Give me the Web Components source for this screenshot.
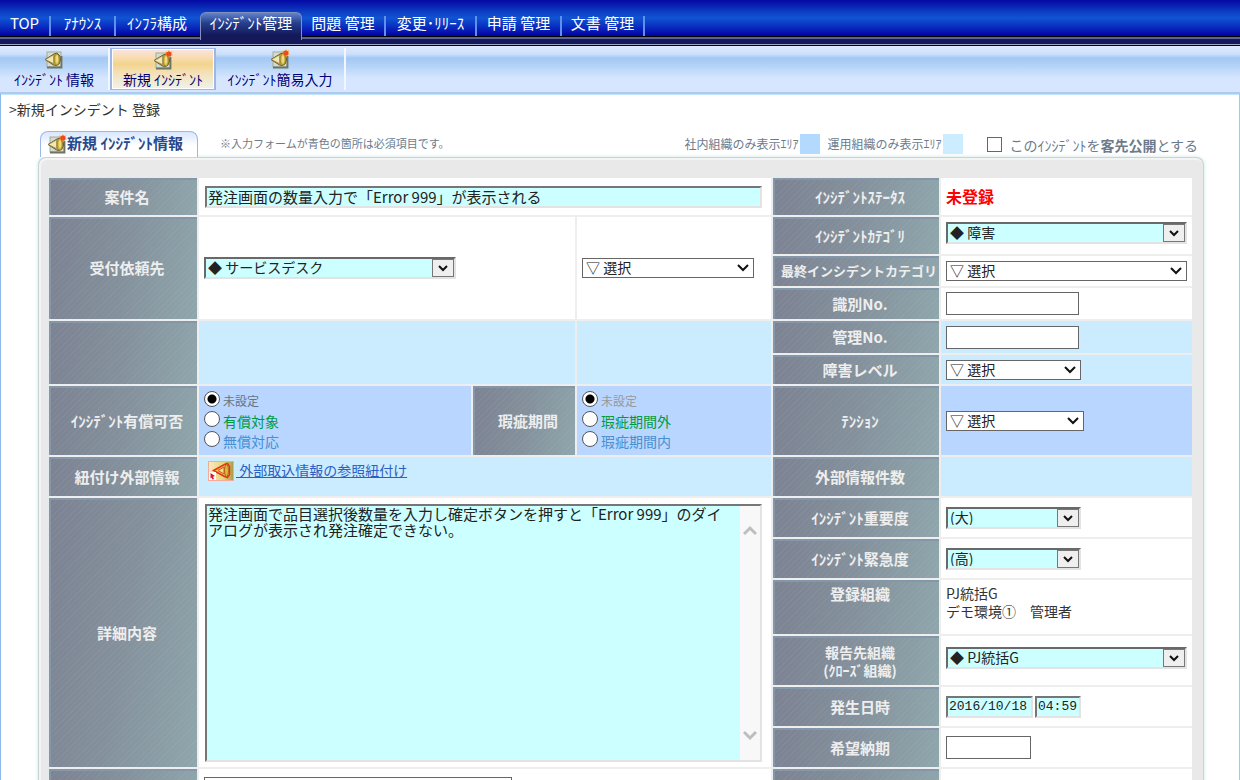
<!DOCTYPE html>
<html lang="ja">
<head>
<meta charset="utf-8">
<title>新規インシデント 登録</title>
<style>
html, body { margin: 0; height: 100%; }
body { font: 14px/16px "Noto Sans CJK JP", sans-serif; color: #333; background: #fff; }
</style>
</head>
<body>
<incident-page></incident-page>

<script>
const sheet = (root, html) => {
  const t = document.createElement('template');
  t.innerHTML = html;
  root.appendChild(t.content.cloneNode(true));
};
const define = (name, render, extra = {}) => {
  customElements.define(name, class extends HTMLElement {
    static formAssociated = !!extra.field;
    constructor() {
      super();
      this.attachShadow({ mode: 'open', delegatesFocus: !!extra.field });
    }
    connectedCallback() {
      if (!this.shadowRoot.childNodes.length) sheet(this.shadowRoot, render(this));
    }
  });
};
const attr = (el, name) => el.getAttribute(name) || '';

/* Megaphone icon, with an optional red "new" spark */
define('horn-icon', el => `
<style>
  :host { display: block; width: 20px; height: 20px; flex: none; }
  svg { display: block; }
</style>
<svg width="20" height="20" viewBox="0 0 20 20" aria-hidden="true">
  <rect x="3" y="3" width="14" height="15" fill="#d3dcd0" stroke="#a2ab9c"/>
  <path d="M3 18.500h14.500V7" fill="none" stroke="#6c7466" stroke-width="1.800"/>
  <path d="M1 10.500l9-5.500 3-1 3 3 .5 4-1.500 4-2.500 1.500-3-.5z" fill="#c4a62f" stroke="#6b5a2a"/>
  <path d="M1.500 10.500l8-4.500v8.500z" fill="#f3e7b4" stroke="#8f8154" stroke-width=".6"/>
  <ellipse cx="12.800" cy="10.500" rx="2.600" ry="5.500" fill="#d8bf4a" stroke="#8f7a26" stroke-width=".8"/>
  <path d="M13 6.500v7" stroke="#f6eeb0" stroke-width="1.200"/>
  ${el.hasAttribute('fresh') ? '<path d="M16 0l1 2 2.500-1-1 2.500 1.500 2-2.500.3-1 2.200-1.800-2-2.700.5 1.300-2.500-1.300-2.500 2.800.5z" fill="#ffb03a"/><circle cx="15.800" cy="4" r="2.600" fill="#ee4a1e"/>' : ''}
</svg>`);

define('link-icon', () => `
<style>:host { display: block; width: 26px; height: 20px; flex: none; white-space: normal; } svg { display: block; }</style>
<svg width="26" height="20" viewBox="0 0 26 20" aria-hidden="true">
  <defs><linearGradient id="g"><stop offset="0" stop-color="#fdebc0"/><stop offset=".6" stop-color="#e6d479"/><stop offset="1" stop-color="#a89a48"/></linearGradient></defs>
  <rect x=".5" y=".5" width="25" height="19" fill="url(#g)" stroke="#f6ab98"/>
  <path d="M5.500 9.500l11-6 3-1 2 3v8l-2 3-3-1z" fill="#eecb4a" stroke="#e2351c" stroke-width="1.500"/>
  <path d="M10 9.500l6-3.500v7z" fill="#f3dc8a" stroke="#e2501c"/>
  <ellipse cx="18.500" cy="9.500" rx="2" ry="6" fill="#d9b83a" stroke="#b85a1c"/>
  <rect x="1" y="11" width="7" height="8" fill="#fff"/>
  <path d="M2.500 12l4.500 3-2 .8 1 2.200-1.500.5-1-2-1 1z" fill="#e01530"/>
</svg>`);

define('nav-tab', el => `
<style>
  :host { display: flex; flex: none; box-sizing: border-box; height: 36px; padding-top: 16px; }
  a { flex: 1; text-align: center; font-size: 15px; line-height: 14px; color: #fff; text-decoration: none;
      white-space: nowrap; border-right: 2px solid #5f90f0; height: 20px; box-sizing: border-box; }
  :host([current]) { padding-top: 12px; height: 40px; position: relative; }
  :host([current]) a { height: 28px; padding-top: 3px; border: 1px solid #8290c0; border-bottom: 0; border-radius: 6px 6px 0 0;
      background: linear-gradient(#6283cc 0, #26408e 10px, #15195a 22px); }
  :host([before]) a { border-right-color: transparent; }
</style>
<a href="#${attr(el, 'to')}"><slot></slot></a>`);

define('sub-tab', el => `
<style>
  :host { display: block; flex: none; box-sizing: border-box; height: 42px; margin-top: 2px; border-right: 2px solid #f2f6ff; }
  a { display: flex; flex-direction: column; align-items: center; height: 42px; padding-top: 1px; box-sizing: border-box;
      font-size: 14px; line-height: 20px; color: #000078; text-decoration: none; white-space: nowrap; }
  :host([current]) { border: 2px solid #9db8e4; border-width: 1px 2px; }
  :host([current]) a { height: 40px; padding-top: 0; border: 1px solid #fff; line-height: 18px;
      background: linear-gradient(#fbe3dc 0, #f8dcb0 8px, #f3d48c 14px, #f3e2bd 24px, #eef2e6); }
</style>
<a href="#${attr(el, 'to')}"><horn-icon ${el.hasAttribute('fresh') ? 'fresh' : ''}></horn-icon><span><slot></slot></span></a>`);

define('head-cell', () => `
<style>
  :host { display: flex; align-items: center; justify-content: center; text-align: center; box-sizing: border-box;
    font-weight: 700; font-size: 15px; line-height: 16px; color: #eee; white-space: nowrap; padding: 0 0 2px 6px;
    border: 2px solid #8496aa; border-width: 2px 0 0 2px;
    background: repeating-linear-gradient(135deg, rgba(255,255,255,.04) 0 1px, transparent 1px 4px),
                linear-gradient(100deg, #7c8292, #84919c 50%, #8fa6ac); }
  :host([top]) { align-items: flex-start; padding-top: 4px; }
  :host([small]) { font-size: 13px; padding-left: 4px; }
</style><slot></slot>`);

define('data-cell', () => `
<style>
  :host { display: flex; align-items: center; box-sizing: border-box; padding: 0 5px; background: #fff; min-width: 0; gap: 2px; }
  :host([raised]) { padding-bottom: 6px; }
  :host([top]) { align-items: flex-start; padding-top: 4px; }
  :host([low]) { align-items: flex-start; padding-top: 8px; }
  :host([ops]) { background: #cbecff; }
  :host([inner]) { background: #b8d6ff; }
</style><slot></slot>`);

define('drop-list', el => `
<style>
  :host { display: block; flex: none; max-width: 100%; }
  select { display: block; width: 100%; height: 20px; box-sizing: border-box; margin: 0; padding: 0 20px 2px 3px; appearance: none; border-radius: 0;
    font: 14px/16px "Noto Sans CJK JP", sans-serif; color: #222; border: 1px solid #666;
    background: #fff url("data:image/svg+xml,%3Csvg xmlns='http://www.w3.org/2000/svg' width='12' height='8'%3E%3Cpath d='M1 1l5 5 5-5' fill='none' stroke='%23111' stroke-width='2'/%3E%3C/svg%3E") no-repeat right 4px center; }
  :host([must]) select { height: 22px; border: 2px solid; border-color: #696969 #e3e3e3 #e3e3e3 #696969; padding-left: 2px;
    background: #cff url("data:image/svg+xml,%3Csvg xmlns='http://www.w3.org/2000/svg' width='22' height='18'%3E%3Crect x='.5' y='.5' width='21' height='17' fill='%23efefef' stroke='%23777'/%3E%3Cpath d='M7 7l4 4 4-4' fill='none' stroke='%23111' stroke-width='2'/%3E%3C/svg%3E") no-repeat right center; }
</style>
<select aria-label="${attr(el, 'name')}"><option>${attr(el, 'value')}</option></select>`, { field: true });

define('text-box', el => `
<style>
  :host { display: block; flex: none; max-width: 100%; }
  :host([wide]) { flex: 1; padding: 0 4px 0 1px; }
  input { display: block; width: 100%; height: 23px; box-sizing: border-box; margin: 0; padding: 0 1px; border: 1px solid #666; border-radius: 0;
    font: 15px/16px "Noto Sans CJK JP", sans-serif; color: #222; background: #fff; }
  :host([must]) input { height: 22px; background: #cff; border: 2px solid; border-color: #767676 #e3e3e3 #e3e3e3 #767676; }
  :host([stamp]) input { font-family: "Liberation Mono", monospace; font-size: 13px; }
</style>
<input type="text" aria-label="${attr(el, 'name')}" value="${attr(el, 'value')}">`, { field: true });

define('memo-box', el => `
<style>
  :host { display: flex; flex: 1; align-self: stretch; margin: 6px 4px 5px 1px; box-sizing: border-box;
    border: 2px solid; border-color: #767676 #e3e3e3 #e3e3e3 #767676; background: #cff; }
  textarea { flex: 1; min-width: 0; box-sizing: border-box; margin: 0; padding: 0 8px 0 1px; border: 0; resize: none; overflow: hidden; background: transparent;
    font: 15px/16px "Noto Sans CJK JP", sans-serif; color: #222; outline: 0; word-break: break-all; }
  .bar { width: 20px; background: #f8f8f8; display: flex; flex-direction: column; justify-content: space-between; padding: 18px 0; box-sizing: border-box; }
  button { border: 0; padding: 0; background: none; height: 12px; display: flex; justify-content: center; }
</style>
<textarea aria-label="${attr(el, 'name')}">${el.textContent}</textarea>
<div class="bar">
  <button type="button" aria-label="上へ"><svg width="14" height="12"><path d="M1 10l6-6 6 6" fill="none" stroke="#bebebe" stroke-width="3"/></svg></button>
  <button type="button" aria-label="下へ"><svg width="14" height="12"><path d="M1 2l6 6 6-6" fill="none" stroke="#bebebe" stroke-width="3"/></svg></button>
</div>`, { field: true });

define('radio-set', el => {
  const tone = el.hasAttribute('dim') ? '#999' : '#66737f';
  return `
<style>
  :host { display: block; margin-top: 1px; }
  fieldset { border: 0; margin: 0; padding: 0; min-width: 0; }
  label { display: flex; gap: 3px; height: 20px; white-space: nowrap; color: #468fd0; }
  label span { padding-top: 1px; line-height: 18px; }
  label:nth-of-type(1) { color: ${tone}; font-size: 12px; }
  label:nth-of-type(2) { color: #009a3e; }
  input { appearance: none; flex: none; box-sizing: border-box; width: 16px; height: 16px; margin: 0; border: 1px solid #555; border-radius: 50%; background: #fff; }
  input:checked { background: radial-gradient(circle, #000 0 4px, #fff 5px); }
</style>
<fieldset aria-label="${attr(el, 'name')}">
${attr(el, 'items').split(',').map((t, i) => `<label><input type="radio" name="r"${i ? '' : ' checked'}><span>${t}</span></label>`).join('')}
</fieldset>`;
});

define('area-key', () => `
<style>
  :host { display: flex; align-items: center; gap: 2px; font-size: 12px; white-space: nowrap; color: #6c7b8c; }
  i { width: 20px; height: 20px; background: #b3d9ff; }
  :host([ops]) i { background: #ccedff; }
</style><slot></slot><i></i>`);

define('incident-form', () => `
<style>
  :host { display: block; box-sizing: border-box; margin: 0 35px 0 37px; padding: 20px 11px 0 10px; border: 1px solid #c9d5d5; border-bottom: 0;
    border-radius: 8px 8px 0 0; background: #e9e9e9; box-shadow: 0 0 3px 1px #ddf0ee, inset 1px 1px 0 1px #f4f4f4; }
  form { display: grid; gap: 2px; background: #eee; margin: 0;
    grid-template-columns: 148px minmax(0, 272fr) 102px minmax(0, 194fr) 166px minmax(0, 251fr);
    grid-template-rows: minmax(37px, auto) minmax(37px, auto) 30px 31px 32px 29px minmax(69px, auto) repeat(3, 39px) 54px 49px 39px 39px 40px; }
  .l { grid-column: 1; } .r { grid-column: 5; } .rd { grid-column: 6; }
  .full { grid-column: 2 / 5; } .wide { grid-column: 2 / 4; } .side { grid-column: 4; }
  .a { grid-row: 1; } .b { grid-row: 2 / 5; } .c { grid-row: 5 / 7; } .d { grid-row: 7; } .e { grid-row: 8; } .f { grid-row: 9 / 15; } .g { grid-row: 15; }
  .n2 { grid-row: 2; } .n3 { grid-row: 3; } .n4 { grid-row: 4; } .n5 { grid-row: 5; } .n6 { grid-row: 6; } .n9 { grid-row: 9; }
  .n10 { grid-row: 10; } .n11 { grid-row: 11; } .n12 { grid-row: 12; } .n13 { grid-row: 13; } .n14 { grid-row: 14; }
  .w85 { width: 85px; } .w133 { width: 133px; } .w134 { width: 135px; } .w172 { width: 172px; } .w252 { width: 252px; } .w240 { width: 241px; }
  .w138 { width: 138px; } .w45 { width: 46px; } .w86 { width: 87px; } .w308 { width: 308px; }
  strong { color: #f00; font-size: 16px; padding-bottom: 2px; }
  .ext { display: flex; align-items: center; padding-left: 4px; gap: 2px; color: #2c5fc4; white-space: pre; text-decoration: none; }
  .ext span { text-decoration: underline; padding-bottom: 3px; }
  p { margin: 0; line-height: 18px; }
  .two { line-height: 18px; font-size: 14px; }
</style>
<form>
  <head-cell class="l a"><label for="title">案件名</label></head-cell>
  <data-cell class="full a"><text-box wide must id="title" name="案件名" value="発注画面の数量入力で「Error 999」が表示される"></text-box></data-cell>
  <head-cell class="r a">ｲﾝｼﾃﾞﾝﾄｽﾃｰﾀｽ</head-cell>
  <data-cell class="rd a"><strong>未登録</strong></data-cell>

  <head-cell class="l b"><label for="desk">受付依頼先</label></head-cell>
  <data-cell class="wide b"><drop-list must class="w252" id="desk" name="受付依頼先" value="◆ サービスデスク"></drop-list></data-cell>
  <data-cell class="side b"><drop-list class="w172" name="受付担当者" value="▽ 選択"></drop-list></data-cell>
  <head-cell class="r n2"><label for="cat">ｲﾝｼﾃﾞﾝﾄｶﾃｺﾞﾘ</label></head-cell>
  <data-cell raised class="rd n2"><drop-list must class="w240" id="cat" name="カテゴリ" value="◆ 障害"></drop-list></data-cell>
  <head-cell small class="r n3"><label for="last">最終インシデントカテゴリ</label></head-cell>
  <data-cell class="rd n3"><drop-list class="w240" id="last" name="最終カテゴリ" value="▽ 選択"></drop-list></data-cell>
  <head-cell class="r n4"><label for="idno">識別No.</label></head-cell>
  <data-cell class="rd n4"><text-box class="w133" id="idno" name="識別No."></text-box></data-cell>

  <head-cell class="l c"></head-cell>
  <data-cell ops class="wide c"></data-cell>
  <data-cell ops class="side c"></data-cell>
  <head-cell class="r n5"><label for="mgno">管理No.</label></head-cell>
  <data-cell ops class="rd n5"><text-box class="w133" id="mgno" name="管理No."></text-box></data-cell>
  <head-cell class="r n6"><label for="level">障害レベル</label></head-cell>
  <data-cell ops class="rd n6"><drop-list class="w134" id="level" name="障害レベル" value="▽ 選択"></drop-list></data-cell>

  <head-cell class="l d">ｲﾝｼﾃﾞﾝﾄ有償可否</head-cell>
  <data-cell inner top class="d" style="grid-column:2"><radio-set name="有償可否" items="未設定,有償対象,無償対応"></radio-set></data-cell>
  <head-cell class="d" style="grid-column:3">瑕疵期間</head-cell>
  <data-cell inner top class="side d"><radio-set dim name="瑕疵期間" items="未設定,瑕疵期間外,瑕疵期間内"></radio-set></data-cell>
  <head-cell class="r d"><label for="tension">ﾃﾝｼｮﾝ</label></head-cell>
  <data-cell inner class="rd d"><drop-list class="w138" id="tension" name="テンション" value="▽ 選択"></drop-list></data-cell>

  <head-cell class="l e">紐付け外部情報</head-cell>
  <data-cell ops top class="full e"><a class="ext" href="#external"><link-icon></link-icon><span> 外部取込情報の参照紐付け</span></a></data-cell>
  <head-cell class="r e">外部情報件数</head-cell>
  <data-cell ops class="rd e"></data-cell>

  <head-cell class="l f"><label for="detail">詳細内容</label></head-cell>
  <data-cell class="full f"><memo-box id="detail" name="詳細内容">発注画面で品目選択後数量を入力し確定ボタンを押すと「Error 999」のダイアログが表示され発注確定できない。</memo-box></data-cell>
  <head-cell class="r n9"><label for="weight">ｲﾝｼﾃﾞﾝﾄ重要度</label></head-cell>
  <data-cell class="rd n9"><drop-list must class="w134" id="weight" name="重要度" value="(大)"></drop-list></data-cell>
  <head-cell class="r n10"><label for="urgent">ｲﾝｼﾃﾞﾝﾄ緊急度</label></head-cell>
  <data-cell class="rd n10"><drop-list must class="w134" id="urgent" name="緊急度" value="(高)"></drop-list></data-cell>
  <head-cell top class="r n11">登録組織</head-cell>
  <data-cell top class="rd n11"><p>PJ統括G<br>デモ環境①　管理者</p></data-cell>
  <head-cell class="r n12"><label class="two" for="report">報告先組織<br>(ｸﾛｰｽﾞ組織)</label></head-cell>
  <data-cell raised class="rd n12"><drop-list must class="w240" id="report" name="報告先組織" value="◆ PJ統括G"></drop-list></data-cell>
  <head-cell class="r n13"><label for="day">発生日時</label></head-cell>
  <data-cell class="rd n13"><text-box must stamp class="w86" id="day" name="発生日" value="2016/10/18"></text-box><text-box must stamp class="w45" name="発生時刻" value="04:59"></text-box></data-cell>
  <head-cell class="r n14"><label for="due">希望納期</label></head-cell>
  <data-cell class="rd n14"><text-box class="w85" id="due" name="希望納期"></text-box></data-cell>

  <head-cell class="l g"></head-cell>
  <data-cell low class="full g"><text-box class="w308" name="添付"></text-box></data-cell>
  <head-cell class="r g"></head-cell>
  <data-cell class="rd g"></data-cell>
</form>`);

define('incident-page', () => `
<style>
  :host { display: block; height: 100vh; overflow: hidden; }
  .main { display: flex; height: 36px; border-bottom: 1px solid #000;
    background: linear-gradient(#0508a4 0, #0d3fc4 12px, #1054d2 18px, #0a2cc0 27px, #0000a2 36px); }
  .strip { height: 9px; box-sizing: border-box; border-top: 2px solid #59639a; border-bottom: 1px solid #000; background: #15195a; box-shadow: inset 0 -1px #9aa3c8; }
  .sub { display: flex; height: 46px; border-bottom: 2px solid #b4c8ee; box-shadow: 0 1px #bfe8ff;
    background: linear-gradient(#dfeaff 0, #cde0fb 8px, #a3c8f3 12px, #b9d6f8 22px, #d6e6ff 32px); }
  .frame { border-left: 1px solid #8db8ea; border-right: 1px solid #a9c4e8; min-height: 100%; box-sizing: border-box; }
  h1 { margin: 0; padding: 6px 8px 3px; font-size: 14px; line-height: 18px; font-weight: 400; }
  .bar { display: flex; align-items: center; height: 26px; padding: 10px 41px 0 39px; color: #6c7b8c; }
  .tab { display: flex; box-sizing: border-box; width: 158px; height: 26px; padding: 0 0 2px 6px; align-items: center; flex: none; white-space: nowrap;
    font-size: 15px; font-weight: 700; line-height: 20px; margin: 0; color: #27488a; border: 1px solid #9cb8ea; border-bottom: 0; border-radius: 8px 8px 0 0;
    background: linear-gradient(#d9e6ff, #fff 14px); }
  .tab span { padding-bottom: 2px; }
  .note { margin: 0 auto 0 22px; padding-bottom: 2px; font-size: 11px; white-space: nowrap; }
  .keys { display: flex; gap: 7px; padding-bottom: 1px; }
  label { display: flex; align-items: center; gap: 7px; margin-left: 24px; white-space: nowrap; }
  label input { appearance: none; width: 15px; height: 15px; box-sizing: border-box; margin: 0; border: 1px solid #666; background: #fff; }
  label span { padding-top: 2px; }
</style>
<nav class="main">
  <nav-tab to="top" style="width:51px">TOP</nav-tab>
  <nav-tab to="news" style="width:65px">ｱﾅｳﾝｽ</nav-tab>
  <nav-tab before to="infra" style="width:84px">ｲﾝﾌﾗ構成</nav-tab>
  <nav-tab current to="incident" style="width:102px">ｲﾝｼﾃﾞﾝﾄ管理</nav-tab>
  <nav-tab to="problem" style="width:84px">問題 管理</nav-tab>
  <nav-tab to="change" style="width:91px">変更･ﾘﾘｰｽ</nav-tab>
  <nav-tab to="request" style="width:85px">申請 管理</nav-tab>
  <nav-tab to="docs" style="width:83px">文書 管理</nav-tab>
</nav>
<div class="strip"></div>
<nav class="sub">
  <sub-tab to="list" style="width:110px">ｲﾝｼﾃﾞﾝﾄ 情報</sub-tab>
  <sub-tab current fresh to="new" style="width:106px">新規 ｲﾝｼﾃﾞﾝﾄ</sub-tab>
  <sub-tab fresh to="quick" style="width:130px">ｲﾝｼﾃﾞﾝﾄ簡易入力</sub-tab>
</nav>
<main class="frame">
  <h1>&gt;新規インシデント 登録</h1>
  <div class="bar">
    <h2 class="tab"><horn-icon fresh></horn-icon><span>新規 ｲﾝｼﾃﾞﾝﾄ情報</span></h2>
    <p class="note">※入力フォームが青色の箇所は必須項目です。</p>
    <div class="keys"><area-key>社内組織のみ表示ｴﾘｱ</area-key><area-key ops>運用組織のみ表示ｴﾘｱ</area-key></div>
    <label><input type="checkbox"><span>このｲﾝｼﾃﾞﾝﾄを<b>客先公開</b>とする</span></label>
  </div>
  <incident-form></incident-form>
</main>`);
</script>
</body>
</html>
